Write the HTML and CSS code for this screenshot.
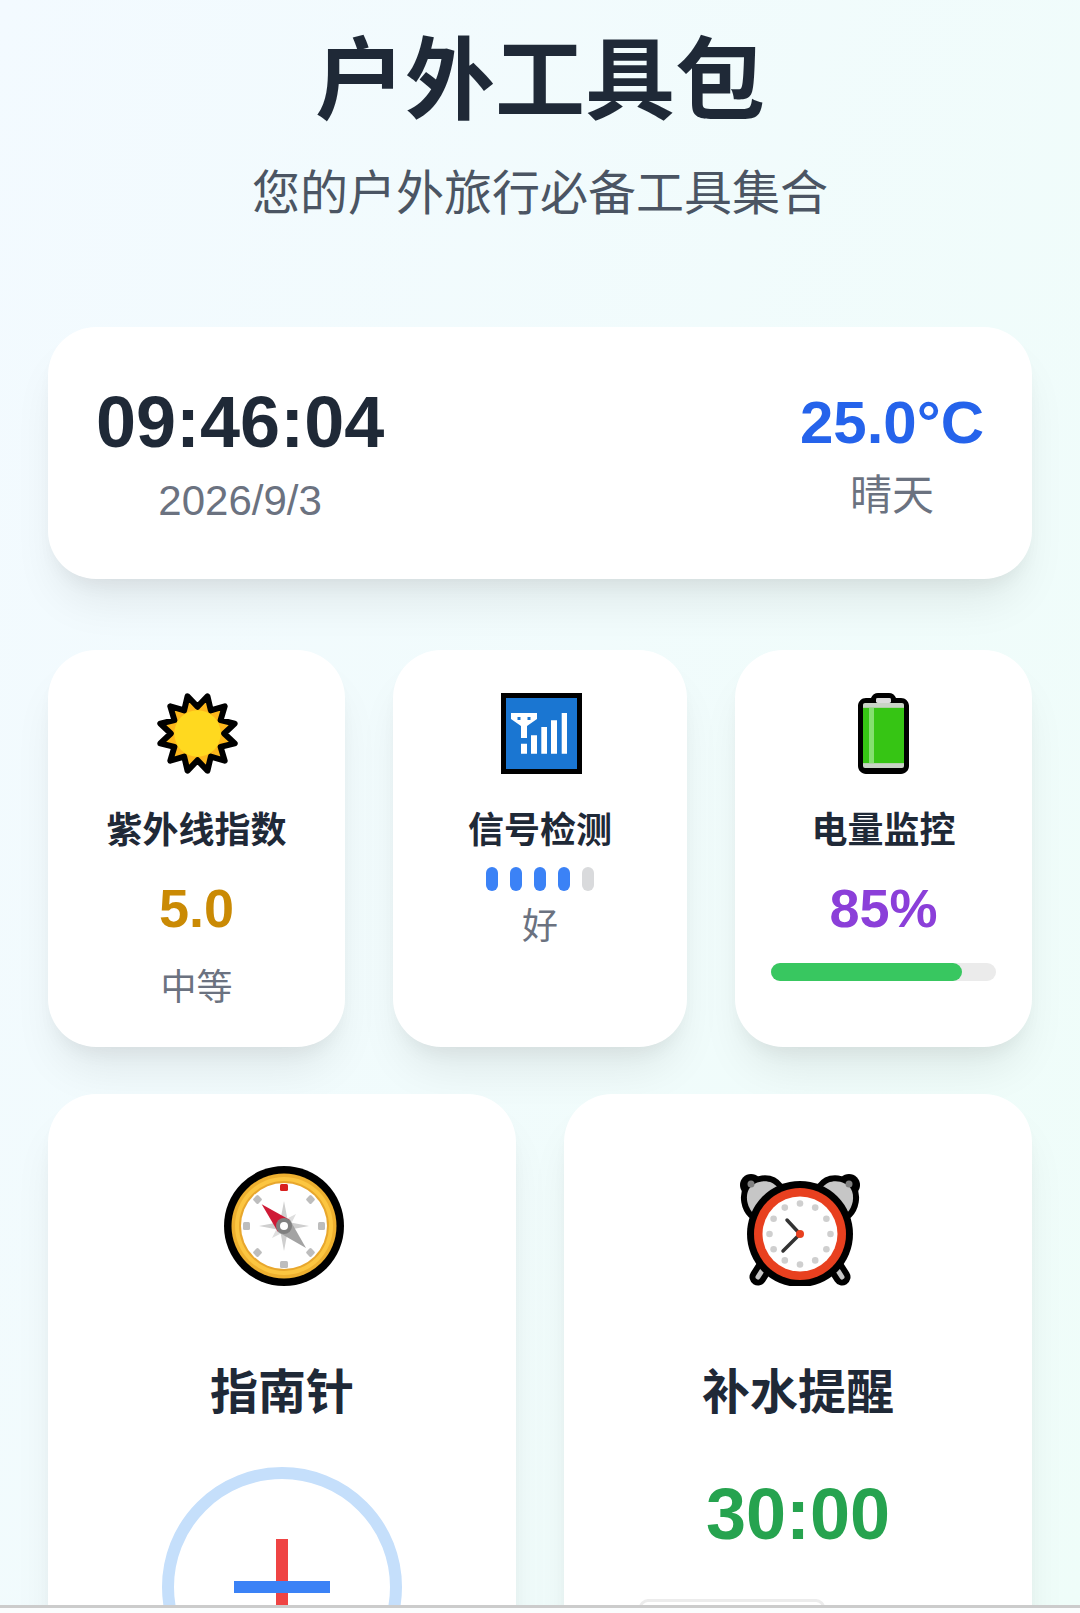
FILE: index.html
```html
<!DOCTYPE html>
<html lang="zh-CN">
<head>
    <meta charset="UTF-8">
    <meta name="viewport" content="width=device-width, initial-scale=1.0">
    <title>户外工具包</title>
    <link rel="stylesheet" href="styles.css">
</head>
<body>
    <div class="page">
        <header class="top">
            <h1>户外工具包</h1>
            <p>您的户外旅行必备工具集合</p>
        </header>

        <section class="card hero">
            <div class="hero-side">
                <div class="time">09:46:04</div>
                <div class="date">2026/9/3</div>
            </div>
            <div class="hero-side hero-right">
                <div class="temp">25.0°C</div>
                <div class="weather">晴天</div>
            </div>
        </section>

        <section class="row-three">
            <div class="card small">
                <svg class="icon-small shift-sun" width="81" height="81" viewBox="0 0 82 82">
                    <polygon points="41,14 51.09,3.33 54.5,17.62 68.58,13.42 64.38,27.5 78.67,30.91 68,41 78.67,51.09 64.38,54.5 68.58,68.58 54.5,64.38 51.09,78.67 41,68 30.91,78.67 27.5,64.38 13.42,68.58 17.62,54.5 3.33,51.09 14,41 3.33,30.91 17.62,27.5 13.42,13.42 27.5,17.62 30.91,3.33" fill="#fdb71c" stroke="#000" stroke-width="6" stroke-linejoin="round"/>
                    <circle cx="41" cy="41" r="23.5" fill="#ffd91f"/>
                </svg>
                <h3>紫外线指数</h3>
                <div class="value uv">5.0</div>
                <div class="note">中等</div>
            </div>
            <div class="card small">
                <svg class="icon-small shift-signal" width="81" height="81" viewBox="0 0 81 81">
                    <rect width="81" height="81" fill="#000"/>
                    <rect x="5" y="5" width="71" height="71" fill="#1a76d2"/>
                    <path d="M10 20H36V26L26 33V45H20V33L10 26Z" fill="#fff"/>
                    <path d="M16.5 24h3v3h-3zM26.5 24h3v3h-3z" fill="#1a76d2"/>
                    <path d="M20 50.7h6v10h-6zM30 42.3h6v18.4h-6zM40.3 34h5.7v26.7h-5.700zM50 27.3h6v33.4h-6zM60.7 20h5.300v40.700h-5.300z" fill="#fff"/>
                </svg>
                <h3>信号检测</h3>
                <div class="bars">
                    <span class="bar on"></span>
                    <span class="bar on"></span>
                    <span class="bar on"></span>
                    <span class="bar on"></span>
                    <span class="bar"></span>
                </div>
                <div class="note note-close">好</div>
            </div>
            <div class="card small">
                <svg class="icon-small" width="51" height="81" viewBox="0 0 51 82" preserveAspectRatio="none">
                    <path d="M13 5C14 2 17 0 20 0H31C34 0 37 2 38 5H43C47.400 5 51 8.600 51 13V74C51 78.400 47.400 82 43 82H8C3.600 82 0 78.400 0 74V13C0 8.600 3.600 5 8 5Z" fill="#000"/>
                    <rect x="5" y="10" width="41" height="66" rx="2" fill="#c9d3c6"/>
                    <rect x="18" y="5" width="15" height="5" rx="1.500" fill="#dcdcdc"/>
                    <rect x="5" y="15" width="41" height="56" fill="#36c514"/>
                    <rect x="11" y="15" width="5" height="56" fill="#84df70"/>
                </svg>
                <h3>电量监控</h3>
                <div class="value power">85%</div>
                <div class="track"><div class="fill" style="width: 85%"></div></div>
            </div>
        </section>

        <section class="row-two">
            <div class="card big">
                <div class="icon-box">
                    <svg width="120" height="120" viewBox="0 0 120 120">
                        <circle cx="60" cy="60" r="60" fill="#000"/>
                        <circle cx="60" cy="60" r="52.500" fill="#eeb02f"/>
                        <circle cx="60" cy="60" r="49" fill="#fcc641"/>
                        <circle cx="60" cy="60" r="45" fill="#e8a72d"/>
                        <circle cx="60" cy="60" r="43" fill="#fff"/>
                        <g fill="#bdbdbd">
                            <rect x="56" y="95" width="8" height="7" rx="1.500"/>
                            <rect x="19" y="56" width="7" height="8" rx="1.500"/>
                            <rect x="94" y="56" width="7" height="8" rx="1.500"/>
                            <rect x="30" y="30" width="7" height="7" rx="1.500" transform="rotate(45 33.500 33.500)"/>
                            <rect x="83" y="30" width="7" height="7" rx="1.500" transform="rotate(45 86.500 33.500)"/>
                            <rect x="30" y="83" width="7" height="7" rx="1.500" transform="rotate(45 33.500 86.500)"/>
                            <rect x="83" y="83" width="7" height="7" rx="1.500" transform="rotate(45 86.500 86.500)"/>
                        </g>
                        <rect x="56" y="18" width="8" height="7" rx="1.500" fill="#d8201f"/>
                        <path d="M60 35L64 56L85 60L64 64L60 85L56 64L35 60L56 56Z" fill="#cfcfcf"/>
                        <path d="M48 48L60 54L72 48L66 60L72 72L60 66L48 72L54 60Z" fill="#dedede"/>
                        <path d="M37.700 38.300L66 54L54 66Z" fill="#cf1a36"/>
                        <path d="M82 82L54 66L66 54Z" fill="#a3a3a3"/>
                        <circle cx="60" cy="60" r="8" fill="#808080"/>
                        <circle cx="60" cy="60" r="4" fill="#fff"/>
                    </svg>
                </div>
                <h2>指南针</h2>
                <div class="dial">
                    <span class="needle"></span>
                    <span class="cross"></span>
                </div>
            </div>
            <div class="card big">
                <div class="icon-box">
                    <svg width="120" height="112" viewBox="0 0 120 112">
                        <path d="M25 92L18 103M95 92L102 103" stroke="#000" stroke-width="17" stroke-linecap="round"/>
                        <path d="M25 92L18 103M95 92L102 103" stroke="#c6c6c6" stroke-width="5" stroke-linecap="round"/>
                        <circle cx="11" cy="11" r="11" fill="#000"/>
                        <circle cx="109" cy="11" r="11" fill="#000"/>
                        <g stroke="#000" stroke-width="12" stroke-linejoin="round" fill="#c6c6c6">
                            <path d="M13 39C7 33 5 22 9 15C14 7 30 3 38 14L28 27Z"/>
                            <path d="M107 39C113 33 115 22 111 15C106 7 90 3 82 14L92 27Z"/>
                        </g>
                        <path d="M13 39C7 33 5 22 9 15C14 7 30 3 38 14L28 27Z" fill="#c6c6c6"/>
                        <path d="M107 39C113 33 115 22 111 15C106 7 90 3 82 14L92 27Z" fill="#c6c6c6"/>
                        <circle cx="11" cy="10" r="3.500" fill="#808080"/>
                        <circle cx="109" cy="10" r="3.500" fill="#808080"/>
                        <circle cx="60" cy="60" r="53" fill="#000"/>
                        <circle cx="60" cy="60" r="46" fill="#e8401f"/>
                        <circle cx="60" cy="60" r="37.500" fill="#fff"/>
                        <g fill="#cfcfcf">
                            <circle cx="60" cy="29.500" r="3.300"/>
                            <circle cx="75.200" cy="33.600" r="3.300"/>
                            <circle cx="86.400" cy="44.800" r="3.300"/>
                            <circle cx="90.500" cy="60" r="3.300"/>
                            <circle cx="86.400" cy="75.200" r="3.300"/>
                            <circle cx="75.200" cy="86.400" r="3.300"/>
                            <circle cx="60" cy="90.500" r="3.300"/>
                            <circle cx="44.800" cy="86.400" r="3.300"/>
                            <circle cx="33.600" cy="75.200" r="3.300"/>
                            <circle cx="29.500" cy="60" r="3.300"/>
                            <circle cx="33.600" cy="44.800" r="3.300"/>
                            <circle cx="44.800" cy="33.600" r="3.300"/>
                        </g>
                        <path d="M47 46L60 60L43 77" fill="none" stroke="#333" stroke-width="3.500" stroke-linecap="round" stroke-linejoin="round"/>
                        <circle cx="60" cy="60" r="4" fill="#e8401f"/>
                    </svg>
                </div>
                <h2>补水提醒</h2>
                <div class="count">30:00</div>
                <button class="start-btn"></button>
            </div>
        </section>
    </div>
    <div class="edge"></div>
</body>
</html>
```

FILE: styles.css
```css
html, body {
    margin: 0;
    padding: 0;
    height: 1613px;
    overflow: hidden;
}
body {
    display: flex;
    flex-direction: column;
    font-family: "Liberation Sans", "Noto Sans CJK SC", sans-serif;
    color: #1f2937;
    background: linear-gradient(110deg, #f3faff, #effdf9);
}
.page {
    flex: 1;
    min-height: 0;
    overflow: hidden;
    padding: 0 48px;
}
/* thin rule at the bottom of the shot */
.edge {
    height: 5px;
    border-top: 3px solid #cccccc;
    background-color: #fbfdfe;
}
.top {
    text-align: center;
    height: 327px;
}
.top h1 {
    margin: 0;
    padding-top: 26px;
    font-size: 90px;
    line-height: 110px;
    font-weight: 700;
}
.top p {
    margin: 0;
    padding-top: 24px;
    font-size: 48px;
    line-height: 68px;
    color: #4b5563;
}
.card {
    box-sizing: border-box;
    background-color: #fff;
    border-radius: 48px;
    box-shadow: 0 30px 45px -9px rgba(0, 0, 0, 0.08), 0 12px 18px -6px rgba(0, 0, 0, 0.05);
}
.hero {
    height: 252px;
    padding: 55px 48px 0;
    margin-bottom: 71px;
    display: flex;
    justify-content: space-between;
    align-items: flex-start;
}
.hero-side {
    text-align: center;
}
.hero-right {
    margin-top: 5px;
}
.time {
    font-size: 72px;
    line-height: 80px;
    font-weight: 700;
}
.date {
    font-size: 42px;
    line-height: 56px;
    margin-top: 11px;
    color: #6b7280;
}
.temp {
    font-size: 60px;
    line-height: 72px;
    font-weight: 700;
    color: #2563eb;
}
.weather {
    font-size: 42px;
    line-height: 56px;
    margin-top: 9px;
    color: #6b7280;
}
.row-three {
    display: grid;
    grid-template-columns: 1fr 294px 1fr;
    gap: 48px;
    margin-bottom: 47px;
}
.small {
    height: 397px;
    padding: 43px 36px 0;
    text-align: center;
}
.icon-small {
    display: block;
    margin: 0 auto;
}
.shift-sun {
    padding-left: 2px;
}
.shift-signal {
    padding-left: 3px;
}
.small h3 {
    margin: 31px 0 0;
    font-size: 36px;
    line-height: 52px;
    font-weight: 700;
}
.value {
    font-size: 54px;
    line-height: 64px;
    font-weight: 700;
    margin-top: 19px;
}
.uv {
    color: #ca8a04;
}
.power {
    color: #8b3fd9;
}
.note {
    font-size: 36px;
    line-height: 50px;
    margin-top: 23px;
    color: #6b7280;
}
.note-close {
    margin-top: 11px;
}
.bars {
    display: flex;
    justify-content: center;
    gap: 12px;
    margin-top: 10px;
}
.bar {
    width: 12px;
    height: 24px;
    border-radius: 6px;
    background-color: #d9dadc;
}
.bar.on {
    background-color: #3b82f6;
}
.track {
    height: 18px;
    margin-top: 23px;
    border-radius: 9px;
    background-color: #ebebeb;
}
.fill {
    height: 100%;
    border-radius: 9px;
    background-color: #38c760;
}
.row-two {
    display: grid;
    grid-template-columns: 1fr 1fr;
    gap: 48px;
}
.big {
    height: 700px;
    padding-top: 71px;
    text-align: center;
}
.icon-box {
    display: flex;
    justify-content: center;
    align-items: flex-end;
    height: 121px;
    padding-left: 4px;
}
.big h2 {
    margin: 73px 0 0;
    font-size: 48px;
    line-height: 68px;
    font-weight: 700;
}
.dial {
    position: relative;
    box-sizing: border-box;
    width: 240px;
    height: 240px;
    margin: 40px auto 0;
    border: 12px solid #c5dffb;
    border-radius: 50%;
}
.needle {
    position: absolute;
    left: 102px;
    top: 60px;
    width: 12px;
    height: 96px;
    background-color: #ef4444;
}
.cross {
    position: absolute;
    left: 60px;
    top: 102px;
    width: 96px;
    height: 12px;
    background-color: #3b82f6;
}
.count {
    margin-top: 45px;
    font-size: 72px;
    line-height: 84px;
    font-weight: 700;
    color: #26a34f;
}
.start-btn {
    display: block;
    box-sizing: border-box;
    width: 186px;
    height: 60px;
    margin: 43px 0 0 75px;
    background-color: #fff;
    border: 3px solid #ececec;
    border-radius: 9px;
}
```
